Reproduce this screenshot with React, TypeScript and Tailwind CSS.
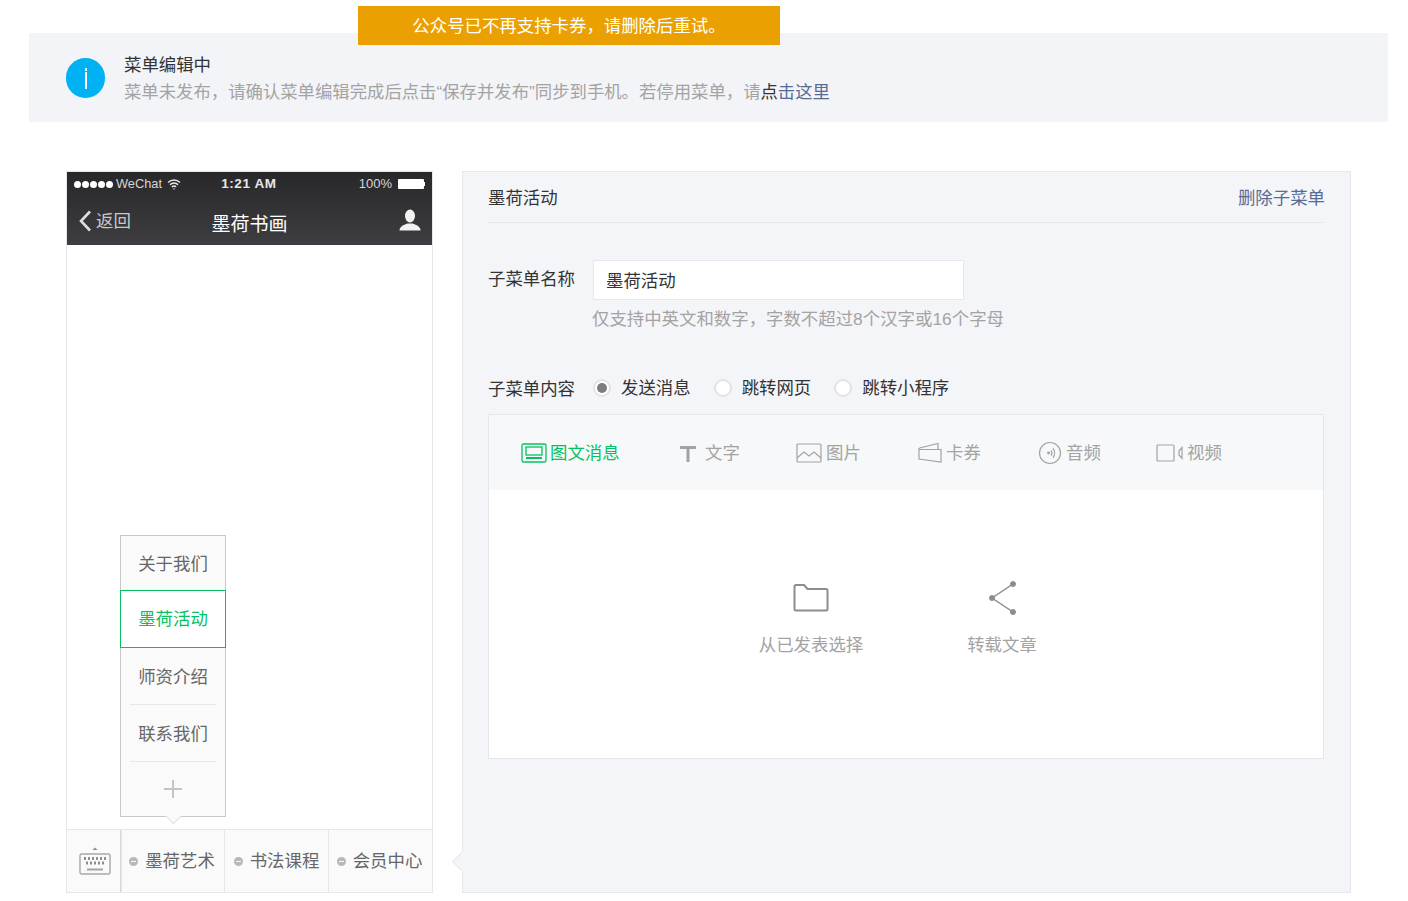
import type { ReactNode } from 'react';

const FONT = "font-['Liberation_Sans','Noto_Sans_CJK_SC',sans-serif]";

const PicIcon = () => (
    <svg width="26" height="20" viewBox="0 0 26 20" fill="none" stroke="#07c160" strokeWidth="1.3">
        <rect x="1" y="1" width="24" height="18" rx="1.5" />
        <rect x="5" y="4" width="16" height="8" />
        <path d="M5 15h16" strokeWidth="2" />
    </svg>
);

const TextIcon = () => (
    <svg width="18" height="18" viewBox="0 0 18 18" fill="#a3a3a3">
        <path d="M1 2h16v3H10.500v13h-3V5H1z" />
    </svg>
);

const ImageIcon = () => (
    <svg width="26" height="20" viewBox="0 0 26 20" fill="none" stroke="#a3a3a3" strokeWidth="1.2">
        <rect x="1" y="1" width="24" height="18" rx="1" />
        <path d="M1 15l7-6 5 4 5-4 7 6" />
    </svg>
);

const CardIcon = () => (
    <svg width="24" height="21" viewBox="0 0 24 21" fill="none" stroke="#a3a3a3" strokeWidth="1.2">
        <path d="M1 6v11l22 3V7.500H1.500z" />
        <path d="M1.500 6L20 1.500v6" />
    </svg>
);

const AudioIcon = () => (
    <svg width="24" height="24" viewBox="0 0 24 24" fill="none" stroke="#a3a3a3" strokeWidth="1.2">
        <circle cx="12" cy="12" r="10.500" />
        <path d="M13 9.500a4 4 0 0 1 0 5M15 7.500a7 7 0 0 1 0 9" />
        <circle cx="10.500" cy="12" r="0.800" fill="#a3a3a3" />
    </svg>
);

const VideoIcon = () => (
    <svg width="28" height="18" viewBox="0 0 28 18" fill="none" stroke="#a3a3a3" strokeWidth="1.2">
        <rect x="1" y="1" width="17" height="16" rx="1" />
        <path d="M26 3.500l-3 3.500v4l3 3.500z" />
    </svg>
);

const FolderIcon = () => (
    <svg width="36" height="30" viewBox="0 0 36 30" fill="none" stroke="#8d8d8d" strokeWidth="2">
        <path d="M1.500 3.500a1.500 1.500 0 0 1 1.500-1.500h8l3.500 4H33a1.500 1.500 0 0 1 1.500 1.500V26a1.500 1.500 0 0 1-1.500 1.500H3A1.500 1.500 0 0 1 1.500 26z" />
    </svg>
);

const ShareIcon = () => (
    <svg width="30" height="36" viewBox="0 0 30 36" fill="#8d8d8d" stroke="#8d8d8d">
        <path d="M25 4L4 18l21 14" fill="none" strokeWidth="1.500" />
        <circle cx="25" cy="4" r="2.500" />
        <circle cx="4" cy="18" r="2.500" />
        <circle cx="25" cy="32" r="2.500" />
    </svg>
);

const KeyboardIcon = () => (
    <svg width="32" height="28" viewBox="0 0 32 28" fill="none">
        <path d="M13.500 3l2.500-2.500L18.500 3z" fill="#8d8d8d" />
        <rect x="1" y="7" width="30" height="20" rx="1.500" stroke="#a8a8a8" strokeWidth="1.400" />
        <path d="M5 11.500h22M7 16h18" stroke="#8d8d8d" strokeWidth="2.800" strokeDasharray="2 2" />
        <path d="M8 22.500h16" stroke="#a3a3a3" strokeWidth="2" />
    </svg>
);

const Radio = ({ label, checked }: { label: string; checked?: boolean }) => (
    <div className="flex items-center gap-[10px]">
        <span className="flex w-[18px] h-[18px] items-center justify-center rounded-full border-2 border-[#e2e3e6] bg-white">
            {checked && <span className="w-[10px] h-[10px] rounded-full bg-[#7d7d7d]" />}
        </span>
        <span className="text-[#333]">{label}</span>
    </div>
);

const Tab = ({ icon, label, width, active }: { icon: ReactNode; label: string; width: string; active?: boolean }) => (
    <div className={`flex items-center ${width} ${active ? 'text-[#07c160]' : 'text-[#a3a3a3]'}`}>
        {icon}
        <span>{label}</span>
    </div>
);

const SubItem = ({ label, height }: { label: string; height: string }) => (
    <div className={`${height} mx-[9px] pt-[2px] flex items-center justify-center text-[#666] border-b border-[#e7e7eb]`}>
        {label}
    </div>
);

const BottomItem = ({ label, width }: { label: string; width: string }) => (
    <div className={`flex items-center justify-center gap-[7px] h-full border-l border-[#e7e7eb] ${width}`}>
        <span className="flex w-[9px] h-[9px] items-center justify-center rounded-full bg-[#b8b8b8]">
            <span className="w-[5px] h-px bg-[#f8f8f8]" />
        </span>
        <span className="text-[#666]">{label}</span>
    </div>
);

export default function App() {
    return (
        <div className={`relative w-[1408px] h-[901px] overflow-hidden bg-white text-[17.42px] leading-[24px] ${FONT}`}>
            <div className="absolute left-[358px] top-[6px] w-[422px] h-[39px] flex items-center justify-center bg-[#eaa000] text-white">
                公众号已不再支持卡券，请删除后重试。
            </div>

            <div className="pt-[33px] pl-[29px] pr-[20px]">
                <div className="h-[89px] flex items-center bg-[#f3f4f8] pl-[37px]">
                    <div className="w-[39px] h-[40px] rounded-full bg-[#00b2f4] flex items-center justify-center">
                        <span className="block w-[2px] h-[17px] mt-[5px] bg-white relative">
                            <span className="absolute left-0 -top-[4px] w-[2px] h-[3px] bg-white" />
                        </span>
                    </div>
                    <div className="ml-[19px] mt-[2px]">
                        <div className="text-[#333] leading-[27px]">菜单编辑中</div>
                        <div className="text-[#a3a3a3] leading-[27px] text-[17.36px]">
                            菜单未发布，请确认菜单编辑完成后点击“保存并发布”同步到手机。若停用菜单，请<span className="text-[#576b95]"><span className="text-[#333]">点</span>击这里</span>
                        </div>
                    </div>
                </div>
            </div>

            <div className="flex mt-[49px] ml-[66px]">
                <div className="w-[367px] h-[722px] border border-[#e7e7eb] flex flex-col relative">
                    <div className="h-[73px] bg-gradient-to-b from-[#28282a] to-[#3e3e42] text-white shrink-0">
                        <div className="h-[24px] flex items-center justify-between px-[7px] text-[13px]">
                            <div className="flex items-center gap-[3px] text-[#d6d6d6]">
                                <span className="flex gap-px">
                                    <span className="w-[7px] h-[7px] rounded-full bg-white" />
                                    <span className="w-[7px] h-[7px] rounded-full bg-white" />
                                    <span className="w-[7px] h-[7px] rounded-full bg-white" />
                                    <span className="w-[7px] h-[7px] rounded-full bg-white" />
                                    <span className="w-[7px] h-[7px] rounded-full bg-white" />
                                </span>
                                <span className="text-[12.8px] mr-[2px]">WeChat</span>
                                <svg width="14" height="11" viewBox="0 0 14 11" fill="none" stroke="#e8e8e8" strokeWidth="1.400">
                                    <path d="M1 3.500a8.500 8.500 0 0 1 12 0M3 5.800a5.500 5.500 0 0 1 8 0M5 8a2.500 2.500 0 0 1 4 0" />
                                    <path d="M7 10.800L5.800 9.400h2.400z" fill="#e8e8e8" stroke="none" />
                                </svg>
                            </div>
                            <div className="ml-[-42px] text-[13.5px] font-bold tracking-[0.6px] text-[#e6e6e6]">1:21 AM</div>
                            <div className="flex items-center gap-[6px] text-[#d6d6d6] text-[13px]">
                                100%
                                <span className="flex items-center">
                                    <span className="w-[26px] h-[10px] bg-white rounded-[1px]" />
                                    <span className="w-[1px] h-[4px] bg-white" />
                                </span>
                            </div>
                        </div>
                        <div className="relative h-[49px] flex items-center justify-center">
                            <div className="absolute left-[11px] top-[13px] flex items-center gap-[4px] text-[#c8c8c8]">
                                <svg width="14" height="22" viewBox="0 0 14 22" fill="none" stroke="#dedede" strokeWidth="2.600">
                                    <path d="M12 1.500L3 11l9 9.500" />
                                </svg>
                                <span>返回</span>
                            </div>
                            <div className="mt-[9px] text-[19px] text-white">墨荷书画</div>
                            <svg className="absolute right-[11px] top-[13px]" width="22" height="22" viewBox="0 0 22 22" fill="#f2f2f2">
                                <ellipse cx="11" cy="7" rx="5" ry="6.500" />
                                <path d="M0.500 21.500c0-4 4-5.500 8-7h5c4 1.500 8 3 8 7z" />
                            </svg>
                        </div>
                    </div>

                    <div className="flex-1" />

                    <div className="absolute left-[53px] top-[363px] w-[106px] h-[282px] border border-[#c9c9cd] bg-[#fafafa] flex flex-col">
                        <SubItem label="关于我们" height="h-[55px]" />
                        <div className="h-[58px] -mx-px -mt-px flex items-center justify-center border border-[#07c160] bg-white text-[#07c160] relative">
                            墨荷活动
                        </div>
                        <SubItem label="师资介绍" height="h-[57px]" />
                        <SubItem label="联系我们" height="h-[57px]" />
                        <div className="flex-1 flex items-center justify-center">
                            <svg width="18" height="18" viewBox="0 0 18 18" fill="#c4c4c4">
                                <path d="M8 0h2v8h8v2h-8v8H8v-8H0V8h8z" />
                            </svg>
                        </div>
                        <div className="absolute left-[47px] top-[275px] w-[11px] h-[11px] rotate-45 bg-[#fafafa] border-r border-b border-[#e0e0e2]" />
                    </div>

                    <div className="h-[63px] flex items-center border-t border-[#e7e7eb] bg-[#fafafa] shrink-0">
                        <div className="w-[54px] h-full pl-[2px] flex items-center justify-center border-r border-[#d8d8d8]">
                            <KeyboardIcon />
                        </div>
                        <BottomItem label="墨荷艺术" width="w-[103px] pr-[2px]" />
                        <BottomItem label="书法课程" width="w-[104px]" />
                        <BottomItem label="会员中心" width="w-[104px] pr-[2px]" />
                    </div>
                </div>

                <div className="relative ml-[29px] w-[889px] h-[722px] border border-[#e7e7eb] bg-[#f4f5f9] pl-[25px] pr-[26px]">
                    <div className="absolute -left-[8px] top-[682px] w-[15px] h-[15px] rotate-45 bg-[#f4f5f9] border-l border-b border-[#e7e7eb]" />
                    <div className="h-[51px] pt-[2px] flex items-center justify-between border-b border-[#e7e7eb] text-[#333]">
                        <span>墨荷活动</span>
                        <span className="text-[#576b95] mr-[-1px]">删除子菜单</span>
                    </div>

                    <div className="mt-[37px] flex">
                        <div className="w-[105px] pt-[7px] text-[#333]">子菜单名称</div>
                        <div>
                            <div className="w-[371px] h-[40px] pt-[2px] flex items-center px-[12px] bg-white border border-[#e7e7eb] text-[#333]">墨荷活动</div>
                            <div className="mt-[7px] ml-[-1px] text-[#a3a3a3]">仅支持中英文和数字，字数不超过8个汉字或16个字母</div>
                        </div>
                    </div>

                    <div className="mt-[43px] flex items-center h-[28px]">
                        <div className="w-[105px] text-[#333] pt-[2px]">子菜单内容</div>
                        <div className="flex gap-[23px]">
                            <Radio label="发送消息" checked />
                            <Radio label="跳转网页" />
                            <Radio label="跳转小程序" />
                        </div>
                    </div>

                    <div className="mt-[12px] h-[345px] border border-[#e7e7eb] bg-white flex flex-col">
                        <div className="h-[75px] flex items-center pl-[32px] bg-[#f6f8f9]">
                            <Tab icon={<PicIcon />} label="图文消息" width="w-[158px] gap-[3px]" active />
                            <Tab icon={<TextIcon />} label="文字" width="w-[117px] gap-[8px]" />
                            <Tab icon={<ImageIcon />} label="图片" width="w-[122px] gap-[4px]" />
                            <Tab icon={<CardIcon />} label="卡券" width="w-[120px] gap-[4px]" />
                            <Tab icon={<AudioIcon />} label="音频" width="w-[118px] gap-[4px]" />
                            <Tab icon={<VideoIcon />} label="视频" width="w-[100px] gap-[3px]" />
                        </div>
                        <div className="flex-1 flex pt-[90px] text-[#a3a3a3]">
                            <div className="ml-[262px] w-[120px] flex flex-col items-center">
                                <div className="h-[36px] flex items-center"><FolderIcon /></div>
                                <div className="mt-[17px]">从已发表选择</div>
                            </div>
                            <div className="ml-[71px] w-[120px] flex flex-col items-center">
                                <div className="h-[36px] ml-[2px] flex items-center"><ShareIcon /></div>
                                <div className="mt-[17px]">转载文章</div>
                            </div>
                        </div>
                    </div>
                </div>
            </div>
        </div>
    );
}
